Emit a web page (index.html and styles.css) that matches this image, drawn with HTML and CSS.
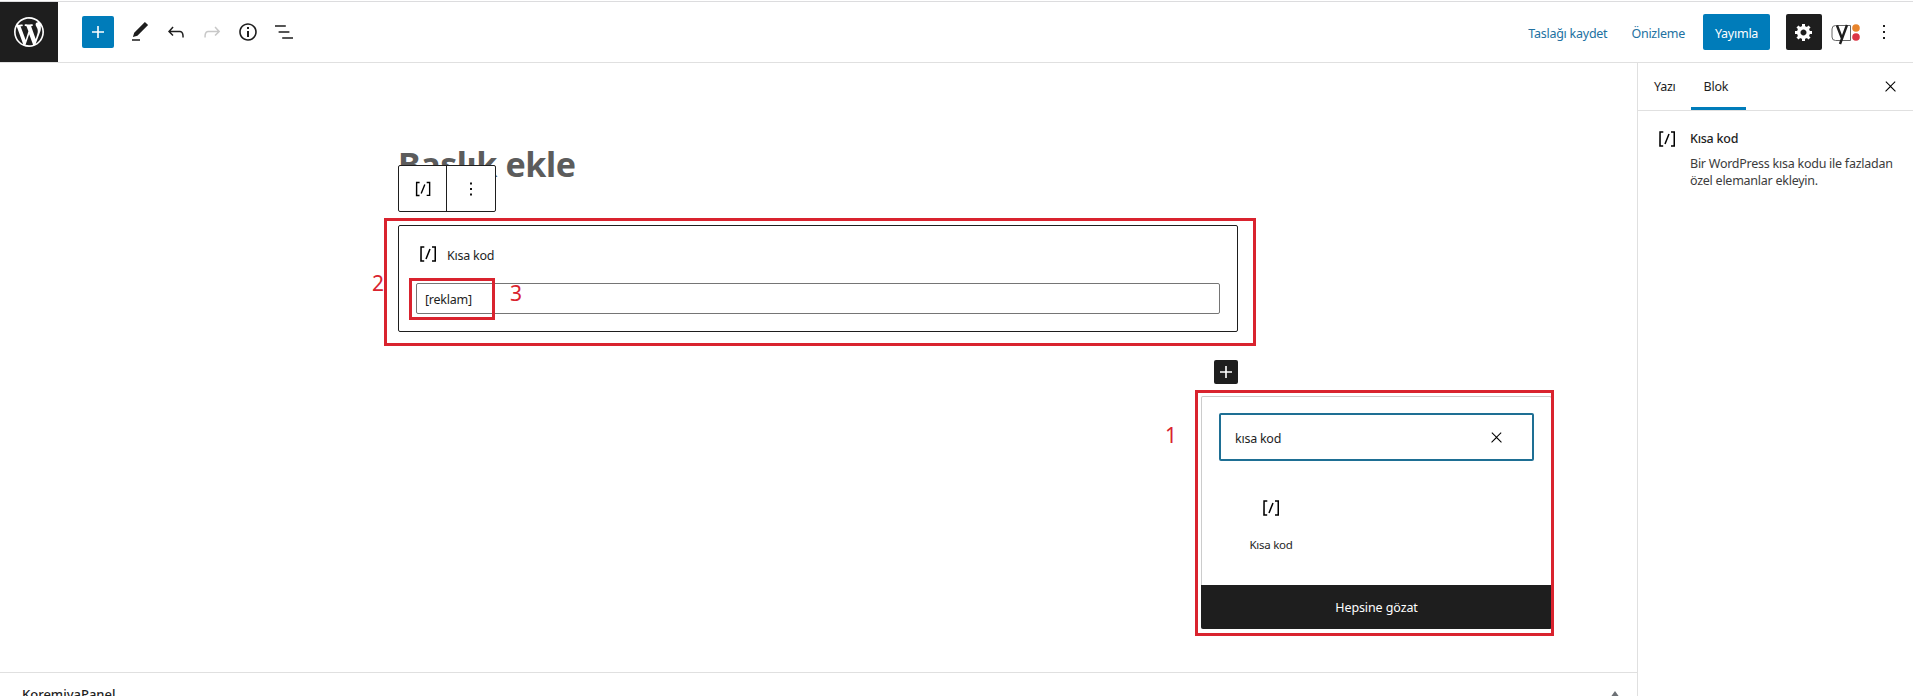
FILE: index.html
```html
<!DOCTYPE html>
<html lang="tr">
<head>
<meta charset="utf-8">
<title>Yeni yazı ekle</title>
<link rel="stylesheet" href="styles.css">
</head>
<body>
<div class="page">
  <header class="topbar">
    <a class="logo"><svg viewBox="0 0 20 20" width="30" height="30"><path fill="#fff" d="M20 10c0-5.51-4.49-10-10-10C4.48 0 0 4.49 0 10c0 5.52 4.48 10 10 10 5.51 0 10-4.48 10-10zM7.78 15.37L4.37 6.22c.55-.02 1.17-.08 1.17-.08.5-.06.44-1.13-.06-1.11 0 0-1.45.11-2.37.11-.18 0-.37 0-.58-.01C4.12 2.69 6.87 1.11 10 1.11c2.33 0 4.45.87 6.05 2.34-.68-.11-1.65.39-1.65 1.58 0 .74.45 1.36.9 2.1.35.61.55 1.36.55 2.46 0 1.49-1.4 5-1.4 5l-3.03-8.37c.54-.02.82-.17.82-.17.5-.05.44-1.25-.06-1.22 0 0-1.44.12-2.38.12-.87 0-2.33-.12-2.33-.12-.5-.03-.56 1.2-.06 1.22l.92.08 1.26 3.41zM17.41 10c.24-.64.74-1.87.43-4.25.7 1.29 1.05 2.71 1.05 4.25 0 3.29-1.73 6.24-4.4 7.78.97-2.59 1.94-5.2 2.92-7.78zM6.1 18.09C3.12 16.65 1.11 13.53 1.11 10c0-1.3.23-2.48.72-3.59C3.25 10.3 4.67 14.2 6.1 18.09zm4.03-6.63l2.58 6.98c-.86.29-1.76.45-2.71.45-.79 0-1.57-.11-2.29-.33.81-2.38 1.62-4.74 2.42-7.1z"/></svg></a>
    <div class="tools">
      <button class="add"><svg viewBox="0 0 24 24" width="24" height="24"><path fill="#fff" d="M18 11.2h-5.2V6h-1.6v5.2H6v1.6h5.2V18h1.6v-5.2H18z"/></svg></button>
      <button class="tool"><svg viewBox="0 0 24 24" width="24" height="24"><path d="M20.1 5.1L16.9 2 6.2 12.7l-1.3 4.4 4.5-1.3L20.1 5.1zM4 20.8h8v-1.5H4v1.5z"/></svg></button>
      <button class="tool"><svg viewBox="0 0 24 24" width="24" height="24"><path d="M18.3 11.7c-.6-.6-1.4-.9-2.3-.9H6.7l2.9-3.3-1.1-1-4.5 5L8.5 16l1-1-2.7-2.7H16c.5 0 .9.2 1.3.5 1 1 1 3.4 1 4.5v.3h1.5v-.2c0-1.5 0-4.3-1.5-5.7z"/></svg></button>
      <button class="tool off"><svg viewBox="0 0 24 24" width="24" height="24"><path d="M15.6 6.5l-1.1 1 2.9 3.3H8c-.9 0-1.7.3-2.3.9-1.4 1.5-1.4 4.2-1.4 5.6v.2h1.5v-.3c0-1.1 0-3.5 1-4.5.3-.3.7-.5 1.3-.5h9.2L14.5 15l1.1 1.1 4.6-4.6-4.6-5z"/></svg></button>
      <button class="tool"><svg viewBox="0 0 24 24" width="24" height="24"><path d="M12 3.2c-4.8 0-8.8 3.9-8.8 8.8 0 4.8 3.9 8.8 8.8 8.8 4.8 0 8.8-3.9 8.8-8.8 0-4.8-4-8.8-8.8-8.8zm0 16c-4 0-7.2-3.3-7.2-7.2C4.8 8 8 4.8 12 4.8s7.2 3.3 7.2 7.2c0 4-3.2 7.2-7.2 7.2zM11 17h2v-6h-2v6zm0-8h2V7h-2v2z"/></svg></button>
      <button class="tool"><svg viewBox="0 0 24 24" width="24" height="24"><path d="M13.8 5.2H3v1.5h10.8V5.2zm-3.6 12v1.5H21v-1.5H10.2zm7.2-6H6.6v1.5h10.8v-1.5z"/></svg></button>
    </div>
    <div class="actions">
      <a class="link">Taslağı kaydet</a>
      <a class="link">Önizleme</a>
      <button class="publish">Yayımla</button>
      <button class="settings"><svg viewBox="0 0 20 20" width="20" height="20"><path fill="#fff" d="M18 12h-2.18c-.17.7-.44 1.35-.81 1.93l1.54 1.54-2.1 2.1-1.54-1.54c-.58.36-1.23.63-1.91.79V19H8v-2.18c-.68-.16-1.33-.43-1.91-.79l-1.54 1.54-2.12-2.12 1.54-1.54c-.36-.58-.63-1.23-.79-1.91H1V9.03h2.17c.16-.7.44-1.35.8-1.94L2.43 5.55l2.1-2.1 1.54 1.54c.58-.37 1.24-.64 1.93-.81V2h3v2.18c.68.16 1.33.43 1.91.79l1.54-1.54 2.12 2.12-1.54 1.54c.36.59.64 1.24.8 1.94H18V12zm-8.5 1.5c1.66 0 3-1.34 3-3s-1.34-3-3-3-3 1.34-3 3 1.34 3 3 3z"/></svg></button>
      <span class="yoast"><svg viewBox="0 0 30 24" width="30" height="24"><path fill="#fff" stroke="#666" stroke-width="1" d="M4.500 5.500h15v15h-15a3.500 3.500 0 0 1-3.500-3.500v-8a3.500 3.500 0 0 1 3.500-3.500z"/><path fill="none" stroke="#1e1e1e" stroke-width="2.400" d="M6 5.500l4.800 12.500M16 5l-7 19"/><circle cx="25" cy="8" r="3.800" fill="#e8842c"/><circle cx="25" cy="17" r="3.800" fill="#dc3545"/></svg></span>
      <button class="tool kebab"><svg viewBox="0 0 24 24" width="24" height="24"><path d="M13 19h-2v-2h2v2zm0-6h-2v-2h2v2zm0-6h-2V5h2v2z"/></svg></button>
    </div>
  </header>

  <div class="workspace">
    <main class="editor">
      <div class="canvas">
        <h1 class="post-title">Başlık ekle</h1>
        <div class="block-wrap">
          <div class="block-toolbar">
            <span class="bt-cell"><svg viewBox="0 0 24 24" width="24" height="24"><path d="M16 4.2v1.5h2.5v12.5H16v1.5h4V4.2h-4zM4.2 19.8h4v-1.5H5.8V5.8h2.5V4.2h-4l-.1 15.6zm5.1-3.1l1.4.6 4-10-1.4-.6-4 10z"/></svg></span>
            <span class="bt-cell"><svg viewBox="0 0 24 24" width="24" height="24"><path d="M13 19h-2v-2h2v2zm0-6h-2v-2h2v2zm0-6h-2V5h2v2z"/></svg></span>
          </div>
          <section class="shortcode-block">
            <div class="sc-label"><svg viewBox="0 0 24 24" width="24" height="24"><path d="M16 4.2v1.5h2.5v12.5H16v1.5h4V4.2h-4zM4.2 19.8h4v-1.5H5.8V5.8h2.5V4.2h-4l-.1 15.6zm5.1-3.1l1.4.6 4-10-1.4-.6-4 10z"/></svg><span>Kısa kod</span></div>
            <div class="sc-input">[reklam]</div>
          </section>
          <div class="mark mark-2"></div>
          <div class="mark mark-3"></div>
          <span class="mark-no no-2">2</span>
          <span class="mark-no no-3">3</span>
        </div>
        <div class="appender-row">
          <button class="appender"><svg viewBox="0 0 24 24" width="24" height="24"><path fill="#fff" d="M18 11.2h-5.2V6h-1.6v5.2H6v1.6h5.2V18h1.6v-5.2H18z"/></svg></button>
        </div>
      </div>

      <div class="inserter">
        <div class="search"><span>kısa kod</span><svg viewBox="0 0 24 24" width="17" height="17"><path d="M13 11.8l6.1-6.3-1-1-6.1 6.2-6.1-6.2-1 1 6.1 6.3-6.5 6.7 1 1 6.5-6.6 6.5 6.6 1-1z"/></svg></div>
        <div class="result">
          <svg viewBox="0 0 24 24" width="24" height="24"><path d="M16 4.2v1.5h2.5v12.5H16v1.5h4V4.2h-4zM4.2 19.8h4v-1.5H5.8V5.8h2.5V4.2h-4l-.1 15.6zm5.1-3.1l1.4.6 4-10-1.4-.6-4 10z"/></svg>
          <span>Kısa kod</span>
        </div>
        <div class="browse">Hepsine gözat</div>
      </div>
      <div class="mark mark-1"></div>
      <span class="mark-no no-1">1</span>

      <div class="meta-panel">
        <span>KoremiyaPanel</span>
        <svg class="caret" viewBox="0 0 12 8" width="12" height="8"><path fill="#6c7075" d="M6 0l5 7H1z"/></svg>
      </div>
    </main>

    <aside class="sidebar">
      <nav class="tabs">
        <span class="tab">Yazı</span>
        <span class="tab active">Blok</span>
        <svg class="tab-close" viewBox="0 0 24 24" width="17" height="17"><path d="M13 11.8l6.1-6.3-1-1-6.1 6.2-6.1-6.2-1 1 6.1 6.3-6.5 6.7 1 1 6.5-6.6 6.5 6.6 1-1z"/></svg>
      </nav>
      <div class="block-card">
        <svg viewBox="0 0 24 24" width="24" height="24"><path d="M16 4.2v1.5h2.5v12.5H16v1.5h4V4.2h-4zM4.2 19.8h4v-1.5H5.8V5.8h2.5V4.2h-4l-.1 15.6zm5.1-3.1l1.4.6 4-10-1.4-.6-4 10z"/></svg>
        <div class="card-text">
          <h2>Kısa kod</h2>
          <p>Bir WordPress kısa kodu ile fazladan özel elemanlar ekleyin.</p>
        </div>
      </div>
    </aside>
  </div>
</div>
</body>
</html>
```

FILE: styles.css
```css
* { box-sizing: border-box; }
html, body { margin: 0; padding: 0; }
body { font-family: "Noto Sans", "Open Sans", sans-serif; font-size: 12.5px; letter-spacing: -0.25px; color: #1e1e1e; background: #fff; overflow: hidden; }
button { font: inherit; letter-spacing: inherit; border: 0; padding: 0; background: none; display: inline-flex; align-items: center; justify-content: center; }
svg { display: block; }
.page { height: 696px; overflow: hidden; padding-top: 2px; background: linear-gradient(#fff 1px, #dcdcde 1px, #dcdcde 2px, #fff 2px) top/100% 2px no-repeat; }

.topbar { height: 61px; display: flex; align-items: center; border-bottom: 1px solid #e0e0e0; }
.logo { width: 58px; height: 60px; background: #1e1e1e; display: flex; align-items: center; justify-content: center; }
.tools { display: flex; align-items: center; margin-left: 24px; }
.add { width: 32px; height: 32px; background: #007cba; border-radius: 2px; margin-right: 8px; }
.tool { width: 36px; height: 36px; color: #1e1e1e; }
.tool svg { fill: currentColor; }
.tool.off { color: #c8c8c8; }
.actions { display: flex; align-items: center; margin-left: auto; }
.link { color: #2271a1; margin-right: 24px; padding-top: 2px; }
.link + .link { margin-right: 18px; }
.publish { width: 67px; height: 36px; background: #007cba; color: #fff; border-radius: 2px; margin-right: 16px; padding-top: 2px; }
.settings { width: 36px; height: 36px; background: #1e1e1e; border-radius: 2px; margin-right: 9px; }
.yoast { width: 30px; height: 24px; }
.yoast svg { overflow: visible; }
.kebab { margin-left: 5px; margin-right: 11px; }

.workspace { display: flex; height: 633px; }
.editor { position: relative; width: 1637px; flex: none; }
.sidebar { flex: 1; border-left: 1px solid #e0e0e0; }

.canvas { padding-left: 398px; width: 1238px; box-sizing: content-box; }
.post-title { margin: 0; padding-top: 77px; height: 162px; font-size: 34px; letter-spacing: -0.4px; line-height: 48px; font-weight: 700; color: #5c5c5c; }
.block-wrap { position: relative; width: 840px; }
.block-toolbar { position: absolute; left: 0; top: -60px; width: 98px; height: 47px; display: flex; background: #fff; border: 1px solid #1e1e1e; border-radius: 2px; }
.bt-cell { flex: 1; display: flex; align-items: center; justify-content: center; }
.bt-cell:first-child { flex: none; width: 47px; }
.bt-cell + .bt-cell { border-left: 1px solid #1e1e1e; }
.bt-cell svg { width: 22px; height: 22px; }
.shortcode-block { height: 107px; border: 1px solid #1e1e1e; border-radius: 2px; padding: 16px 17px; }
.sc-label { display: flex; align-items: center; height: 24px; gap: 7px; }
.sc-label span { padding-top: 2px; }
.sc-input { margin-top: 17px; height: 31px; border: 1px solid #757575; border-radius: 2px; padding-left: 8px; line-height: 31px; font-size: 12.5px; }

.appender-row { display: flex; justify-content: flex-end; padding-top: 28px; width: 840px; }
.appender { width: 24px; height: 24px; background: #1e1e1e; border-radius: 2px; }

.inserter { position: absolute; left: 1201px; top: 333px; width: 351px; height: 233px; background: #fff; border: 1px solid #ccc; border-bottom: 0; border-radius: 2px; }
.search { margin: 16px 17px 0; height: 48px; border: 2px solid #1e6f94; border-radius: 2px; padding: 0 27px 0 14px; display: flex; align-items: center; justify-content: space-between; }
.search span { padding-top: 2px; }
.result { margin: 35px 0 0 17px; width: 104px; display: flex; flex-direction: column; align-items: center; font-size: 11.5px; gap: 17px; }
.browse { position: absolute; left: -1px; right: -1px; bottom: 0; height: 44px; background: #1e1e1e; color: #fff; letter-spacing: -0.1px; display: flex; align-items: center; justify-content: center; border-radius: 0 0 2px 2px; }

.mark { position: absolute; border: 3px solid #d9232e; pointer-events: none; }
.mark-1 { left: 1195px; top: 327px; width: 359px; height: 246px; }
.mark-2 { left: -14px; top: -7px; width: 872px; height: 128px; }
.mark-3 { left: 11px; top: 53px; width: 86px; height: 42px; }
.mark-no { position: absolute; color: #d9232e; font-size: 21px; letter-spacing: 0; font-weight: 400; line-height: 24px; }
.no-1 { left: 1165px; top: 360px; }
.no-2 { left: -26px; top: 46px; }
.no-3 { left: 112px; top: 56px; }

.meta-panel { position: absolute; left: 0; right: 0; top: 609px; height: 60px; border-top: 1px solid #e0e0e0; padding: 12px 22px 0; font-size: 13px; letter-spacing: 0; font-weight: 500; color: #1e1e1e; }
.caret { position: absolute; right: 16px; top: 18px; }

.tabs { position: relative; height: 48px; border-bottom: 1px solid #e0e0e0; display: flex; align-items: center; }
.tab { height: 47px; padding: 0 16px; line-height: 48px; }
.tab.active { box-shadow: inset 0 -3px 0 #007cba; width: 55px; padding: 0 0 0 13px; margin-left: -1px; }
.tab-close { position: absolute; top: 15px; right: 22px; }
.block-card { display: flex; padding: 16px 16px 0 17px; gap: 11px; }
.card-text h2 { margin: 0; font-size: 12.5px; font-weight: 500; line-height: 24px; }
.card-text p { margin: 4px 0 0; line-height: 17px; width: 215px; color: #3c3c3c; }
```
